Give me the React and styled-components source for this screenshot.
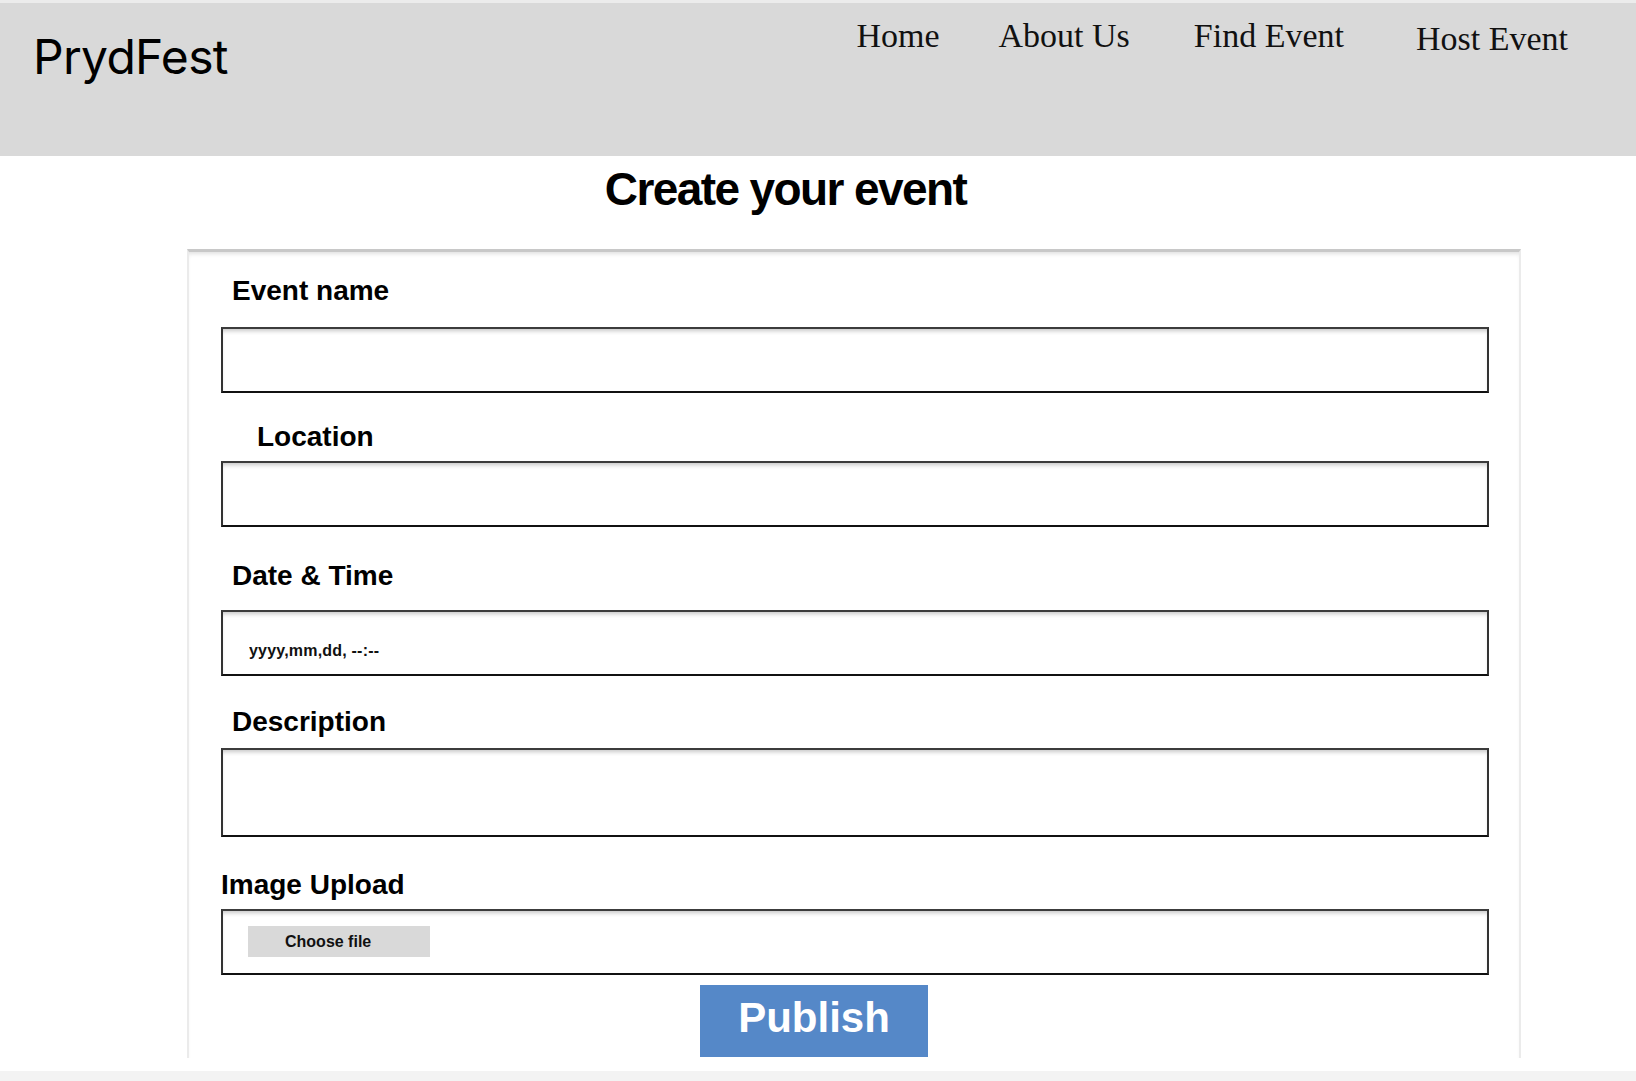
import styled, { createGlobalStyle } from "styled-components";

const GlobalStyle = createGlobalStyle`
  body {
    margin: 0;
    background: #f3f3f3;
  }
  * {
    box-sizing: border-box;
  }
`;

const Header = styled.header`
  display: flex;
  align-items: flex-start;
  height: 156px;
  border-top: 3px solid #ececec;
  background: #d9d9d9;
  padding: 0 68px 0 33px;
`;

const Logo = styled.div`
  margin-top: 25px;
  font-family: Inter, "Liberation Sans", sans-serif;
  font-size: 48px;
  line-height: 58px;
  letter-spacing: -0.7px;
  color: #000;
`;

const Nav = styled.nav`
  display: flex;
  align-items: flex-start;
  margin-left: auto;
  margin-top: 13px;
`;

const NavItem = styled.a`
  margin-left: ${(p) => p.$space || 0}px;
  padding-top: ${(p) => p.$drop || 0}px;
  font-family: "Liberation Serif", serif;
  font-size: 34px;
  line-height: 40px;
  color: #111;
  text-decoration: none;
  cursor: pointer;
`;

const Main = styled.main`
  background: #fff;
  padding: 6px 0 13px;
`;

const Title = styled.h1`
  margin: 0;
  padding-right: 65px;
  text-align: center;
  font-family: "Liberation Sans", Arial, sans-serif;
  font-weight: 700;
  font-size: 46px;
  line-height: 54px;
  letter-spacing: -1.6px;
  color: #000;
`;

const Card = styled.form`
  width: 1334px;
  margin: 33px 0 0 187px;
  padding: 23px 30px 1px 32px;
  border-top: 3px solid #c8c8c8;
  border-left: 2px solid #ebebeb;
  border-right: 2px solid #ebebeb;
  box-shadow: inset 0 4px 4px -2px rgba(0, 0, 0, 0.12);
  background: #fff;
`;

const Field = styled.div`
  display: flex;
  flex-direction: column;
  margin-top: ${(p) => p.$top || 0}px;
`;

const Label = styled.label`
  display: block;
  margin-bottom: ${(p) => p.$gap || 0}px;
  padding-left: ${(p) => p.$indent || 0}px;
  font-family: "Liberation Sans", Arial, sans-serif;
  font-weight: 700;
  font-size: 28px;
  line-height: 32px;
  color: #000;
`;

const boxLook = `
  width: 100%;
  border: 2px solid #333;
  border-top-color: #3c3c3c;
  border-bottom-color: #111;
  background: #fff;
  box-shadow: inset 0 4px 4px -2px rgba(0, 0, 0, 0.22);
  outline: none;
`;

const TextInput = styled.input`
  ${boxLook}
  height: 66px;
  padding: 15px 0 0 26px;
  font-family: "Liberation Sans", Arial, sans-serif;
  font-weight: 700;
  font-size: 16px;
  letter-spacing: 0.2px;
  color: #111;

  &::placeholder {
    color: #111;
    opacity: 1;
  }
`;

const TextArea = styled.textarea`
  ${boxLook}
  height: 89px;
  padding: 10px 26px;
  resize: none;
  font-family: "Liberation Sans", Arial, sans-serif;
  font-size: 16px;
`;

const FileBox = styled.div`
  ${boxLook}
  height: 66px;
  padding: 15px 25px;
`;

const ChooseButton = styled.button`
  width: 182px;
  height: 31px;
  padding: 0 0 0 37px;
  border: none;
  background: #d9d9d9;
  text-align: left;
  font-family: "Liberation Sans", Arial, sans-serif;
  font-weight: 700;
  font-size: 16px;
  line-height: 31px;
  color: #111;
  cursor: pointer;
`;

const ButtonRow = styled.div`
  display: flex;
  margin-top: 10px;
  padding-left: 479px;
`;

const PublishButton = styled.button`
  width: 228px;
  height: 72px;
  padding: 0 0 6px;
  border: none;
  background: #5588c8;
  font-family: "Liberation Sans", Arial, sans-serif;
  font-weight: 700;
  font-size: 42px;
  line-height: 66px;
  color: #fff;
  cursor: pointer;
`;

const Footer = styled.div`
  height: 10px;
  background: #f3f3f3;
`;

const fields = [
  { id: "event-name", label: "Event name", indent: 11, top: 0, gap: 20 },
  { id: "location", label: "Location", indent: 36, top: 28, gap: 8 },
  {
    id: "date-time",
    label: "Date & Time",
    indent: 11,
    top: 33,
    gap: 18,
    placeholder: "yyyy,mm,dd, --:--",
  },
];

const App = () => {
  return (
    <>
      <GlobalStyle />
      <Header>
        <Logo>PrydFest</Logo>
        <Nav>
          <NavItem>Home</NavItem>
          <NavItem $space={59}>About Us</NavItem>
          <NavItem $space={64}>Find Event</NavItem>
          <NavItem $space={72} $drop={3}>
            Host Event
          </NavItem>
        </Nav>
      </Header>
      <Main>
        <Title>Create your event</Title>
        <Card onSubmit={(e) => e.preventDefault()}>
          {fields.map((f) => (
            <Field key={f.id} $top={f.top}>
              <Label htmlFor={f.id} $indent={f.indent} $gap={f.gap}>
                {f.label}
              </Label>
              <TextInput id={f.id} type="text" placeholder={f.placeholder} />
            </Field>
          ))}
          <Field $top={30}>
            <Label htmlFor="description" $indent={11} $gap={10}>
              Description
            </Label>
            <TextArea id="description" />
          </Field>
          <Field $top={32}>
            <Label htmlFor="image-upload" $gap={8}>
              Image Upload
            </Label>
            <FileBox>
              <ChooseButton type="button" id="image-upload">
                Choose file
              </ChooseButton>
            </FileBox>
          </Field>
          <ButtonRow>
            <PublishButton type="submit">Publish</PublishButton>
          </ButtonRow>
        </Card>
      </Main>
      <Footer />
    </>
  );
};

export default App;
